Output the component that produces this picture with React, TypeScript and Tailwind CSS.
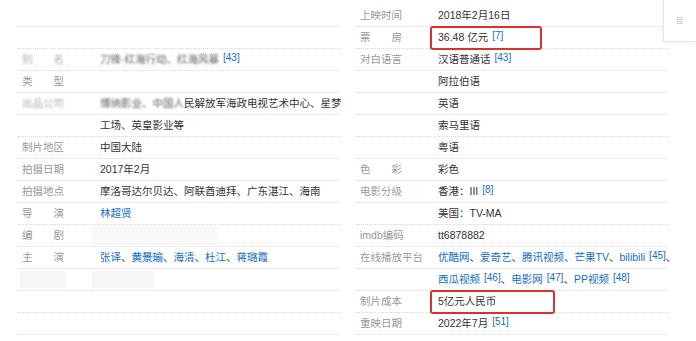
import React from 'react';

type Cell = { label?: React.ReactNode; value?: React.ReactNode };

const Sup = ({ n }: { n: string }) => (
    <sup className="text-[10px] text-[#136ec2] ml-[4px] relative -top-[2px]">[{n}]</sup>
);

const A = ({ children, hl }: { children: React.ReactNode; hl?: boolean }) => (
    <span className={`text-[#136ec2] ${hl ? 'bg-[#e3ecf6]' : ''}`}>{children}</span>
);

// red marker drawn round a value
const Mark = ({ children, w }: { children: React.ReactNode; w: string }) => (
    <span className={`flex items-center h-[24px] -ml-[8px] pl-[6px] border-2 border-[#d8322e] rounded-[3px] ${w}`}>
        {children}
    </span>
);

const Row = ({ label, value }: Cell) => (
    <div className="flex h-[22px] items-center border-b border-dotted border-[#d9d9d9]">
        <div className="w-[82px] shrink-0 pl-[4px] text-[#999] whitespace-pre">{label}</div>
        <div className="flex-1 text-[#333] whitespace-nowrap flex items-center">{value}</div>
    </div>
);

const Blur = ({ children }: { children: React.ReactNode }) => (
    <span className="blur-[1px] opacity-80">{children}</span>
);

const App = () => {
    const left: Cell[] = [
        {},
        {},
        {
            label: <Blur>别　　名</Blur>,
            value: (
                <>
                    <Blur>刀锋·红海行动、红海风暴</Blur>
                    <Sup n="43" />
                </>
            ),
        },
        { label: '类　　型' },
        {
            label: <Blur>出品公司</Blur>,
            value: (
                <>
                    <Blur>博纳影业、中国人</Blur>民解放军海政电视艺术中心、星梦
                </>
            ),
        },
        { value: '工场、英皇影业等' },
        { label: '制片地区', value: '中国大陆' },
        { label: '拍摄日期', value: '2017年2月' },
        { label: '拍摄地点', value: '摩洛哥达尔贝达、阿联酋迪拜、广东湛江、海南' },
        { label: '导　　演', value: <A>林超贤</A> },
        {
            label: '编　　剧',
            value: <span className="block w-[125px] h-[20px] -ml-[8px] bg-[#f8f8f8] blur-[1px]" />,
        },
        {
            label: '主　　演',
            value: (
                <>
                    <A>张译</A>、<A hl>黄景瑜</A>、<A>海清</A>、<A>杜江</A>、<A>蒋璐霞</A>
                </>
            ),
        },
        {
            label: <span className="block w-[46px] h-[18px] -ml-[2px] bg-[#f6f6f6] blur-[1px]" />,
            value: <span className="block w-[62px] h-[18px] -ml-[8px] bg-[#f6f6f6] blur-[1px]" />,
        },
        {},
        {},
    ];

    const right: Cell[] = [
        { label: '上映时间', value: '2018年2月16日' },
        {
            label: '票　　房',
            value: (
                <Mark w="w-[112px]">
                    36.48 亿元
                    <Sup n="7" />
                </Mark>
            ),
        },
        {
            label: '对白语言',
            value: (
                <>
                    汉语普通话
                    <Sup n="43" />
                </>
            ),
        },
        { value: '阿拉伯语' },
        { value: '英语' },
        { value: '索马里语' },
        { value: '粤语' },
        { label: '色　　彩', value: '彩色' },
        {
            label: '电影分级',
            value: (
                <>
                    香港：III
                    <Sup n="8" />
                </>
            ),
        },
        { value: '美国：TV-MA' },
        { label: 'imdb编码', value: 'tt6878882' },
        {
            label: '在线播放平台',
            value: (
                <>
                    <A>优酷网</A>、<A>爱奇艺</A>、<A>腾讯视频</A>、<A>芒果TV</A>、<A>bilibili</A>
                    <Sup n="45" />、
                </>
            ),
        },
        {
            value: (
                <>
                    <A>西瓜视频</A>
                    <Sup n="46" />、<A>电影网</A>
                    <Sup n="47" />、<A>PP视频</A>
                    <Sup n="48" />
                </>
            ),
        },
        { label: '制片成本', value: <Mark w="w-[125px]">5亿元人民币</Mark> },
        {
            label: '重映日期',
            value: (
                <>
                    2022年7月
                    <Sup n="51" />
                </>
            ),
        },
    ];

    return (
        <div
            className="relative w-[696px] h-[341px] bg-white overflow-hidden text-[10.5px] leading-none"
            style={{ fontFamily: '"Liberation Sans", "Noto Sans CJK SC", sans-serif' }}
        >
            <div className="flex pl-[18px] pt-[5px] gap-[16px]">
                <div className="w-[322px]">
                    {left.map((c, i) => (
                        <Row key={i} {...c} />
                    ))}
                </div>
                <div className="w-[312px]">
                    {right.map((c, i) => (
                        <Row key={i} {...c} />
                    ))}
                </div>
            </div>

            {/* floating side box */}
            <div className="absolute right-0 top-0 w-[33px] h-[42px] bg-white border-l border-b border-[#e6e6e6] shadow-[0_1px_4px_rgba(0,0,0,0.08)] flex items-center pl-[12px]">
                <span className="text-[7px] text-[#bbb]">目</span>
            </div>
        </div>
    );
};

export default App;
